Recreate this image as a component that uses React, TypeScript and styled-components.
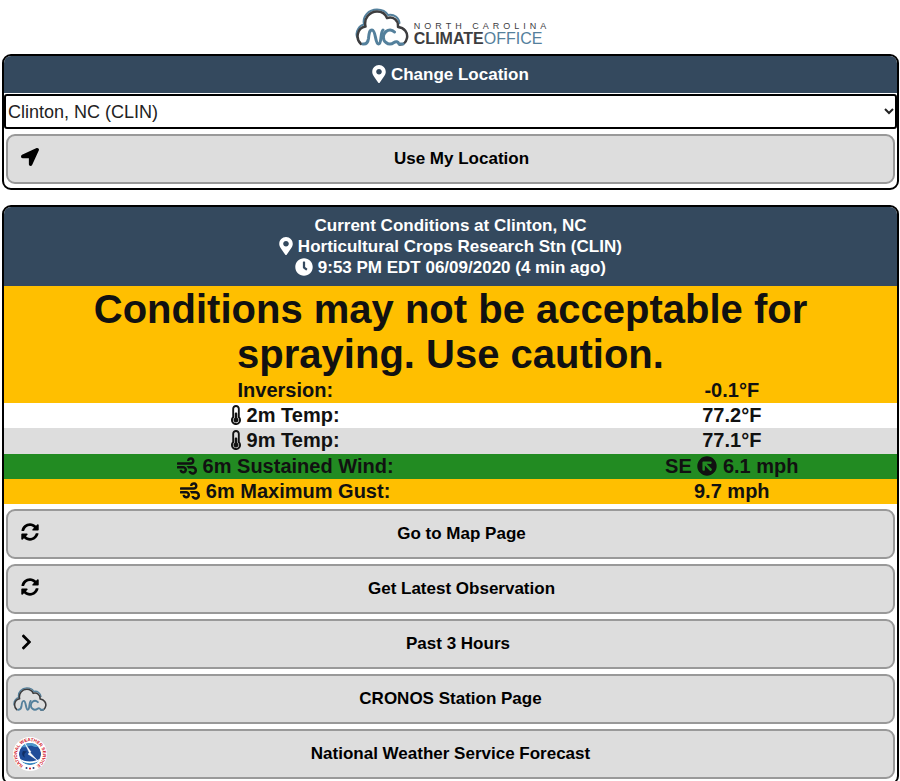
import React from 'react';
import styled, { createGlobalStyle } from 'styled-components';
import {
  FaArrowCircleUp,
  FaChevronRight,
  FaClock,
  FaLocationArrow,
  FaMapMarkerAlt,
  FaSyncAlt,
  FaThermometerHalf,
  FaWind,
} from 'react-icons/fa';

const colors = {
  navy: '#34495e',
  caution: '#ffbf00',
  good: '#228b22',
  gray: '#ddd',
  white: '#fff',
  logoDark: '#3d3d3f',
  logoBlue: '#54809c',
};

const Global = createGlobalStyle`
  *, *::before, *::after { box-sizing: border-box; }
  body {
    margin: 0;
    background: #fff;
    color: #111;
    font-family: "Liberation Sans", Arial, sans-serif;
    font-size: 17px;
  }
`;

const Page = styled.main`
  padding: 8px 1px 8px 2px;
`;

const Brand = styled.header`
  display: flex;
  justify-content: center;
  gap: 5px;
  height: 46px;
`;

const BrandCloud = styled.svg`
  width: 54px;
  height: 38px;
`;

const Wordmark = styled.div`
  padding-top: 14px;
  color: ${colors.logoDark};
`;

const WordmarkTop = styled.div`
  font-size: 9px;
  line-height: 9px;
  letter-spacing: 4px;
  margin-right: -4px;
`;

const WordmarkBottom = styled.div`
  font-size: 16px;
  line-height: 16px;
`;

const WordmarkAccent = styled.span`
  color: ${colors.logoBlue};
`;

const Card = styled.section`
  overflow: hidden;
  margin-bottom: 15px;
  border: 2px solid #000;
  border-radius: 9px;
  background: #fff;
`;

const CardHeader = styled.div`
  padding: 8px;
  background: ${colors.navy};
  color: #fff;
  text-align: center;
  font-weight: bold;
  line-height: 21px;
`;

const HeaderTitle = styled.h2`
  margin: 0;
  font: inherit;
`;

const HeaderLine = styled.div``;

const PinIcon = styled(FaMapMarkerAlt)`
  width: 14px;
  height: 18px;
  vertical-align: -3px;
`;

const ClockIcon = styled(FaClock)`
  width: 18px;
  height: 18px;
  vertical-align: -3px;
`;

const StationSelect = styled.select`
  display: block;
  width: 100%;
  height: 35px;
  margin-top: 1px;
  padding: 0;
  border: 0;
  border-radius: 3px;
  outline: 2px solid #000;
  outline-offset: -2px;
  background: #fff;
  color: #222;
  font: inherit;
  font-size: 18px;
`;

const Actions = styled.div`
  display: flex;
  flex-direction: column;
  gap: 5px;
  padding: 5px 2px 4px;
`;

const ActionButton = styled.button`
  display: flex;
  align-items: center;
  height: 50px;
  padding: 0 13px;
  border: 2px solid #999;
  border-radius: 9px;
  background: ${colors.gray};
  color: #000;
  font: inherit;
  font-weight: bold;
  cursor: pointer;
`;

const ActionLabel = styled.span`
  flex: 1;
`;

const ActionIcon = styled.span<{ $narrow?: boolean }>`
  display: flex;
  padding-bottom: 4px;
  margin-right: 4px;

  svg {
    width: ${(p) => (p.$narrow ? '11px' : '18px')};
    height: 18px;
  }
`;

const ActionLogo = styled.span`
  display: flex;
  flex: 0 0 34px;
  margin: 0 -26px 0 -8px;
`;

const SmallCloud = styled.svg`
  width: 34px;
  height: 24px;
`;

const Seal = styled.svg`
  width: 34px;
  height: 34px;
`;

const SealText = styled.text`
  fill: #d0101e;
  font-size: 9px;
  font-weight: bold;
`;

const Alert = styled.div`
  padding: 1px 0;
  background: ${colors.caution};
  text-align: center;
  font-size: 40px;
  font-weight: bold;
  line-height: 45px;
`;

const Readings = styled.table`
  width: 100%;
  height: 126px;
  border-collapse: collapse;
  table-layout: fixed;
  font-size: 20px;
  line-height: 25px;
  font-weight: bold;
  text-align: center;
`;

const ReadingRow = styled.tr<{ $tone: string }>`
  background: ${(p) => p.$tone};
`;

const Label = styled.th`
  width: 63%;
  padding: 0;
`;

const Value = styled.td`
  padding: 0;
`;

const ThermometerIcon = styled(FaThermometerHalf)`
  width: 10px;
  height: 20px;
  vertical-align: -3px;
`;

const WindIcon = styled(FaWind)`
  width: 20px;
  height: 20px;
  vertical-align: -3px;
`;

const WindDirectionIcon = styled(FaArrowCircleUp)`
  width: 20px;
  height: 20px;
  vertical-align: -3px;
  transform: rotate(-45deg);
`;

const CloudDrawing = () => (
  <g fill="none" strokeLinecap="round" strokeLinejoin="round">
    <path
      d="M2 29C0 23 5 17 9 16.500C7 8 14 1.500 22 1.500C27 1.500 31 3.500 33 7C39 5.500 44 10 44.500 15"
      stroke={colors.logoBlue}
      strokeWidth="2"
    />
    <path
      d="M6 36C0.500 31 1.500 20 10.500 18.500C8.500 10 15 3.500 22 3.500C27 3.500 30.500 6 32 10C38 8 43.500 12 43 19C49.500 19.500 53 25 52 30C51 34.500 48 37 44.500 36.500"
      stroke={colors.logoDark}
      strokeWidth="2.500"
    />
    <path
      d="M8 36C12 36.500 13 34 13.500 30.500C14 25 14.500 22 17 22C21 22 20 36 23.500 36C27 36 25 25 28 22"
      stroke={colors.logoBlue}
      strokeWidth="3"
    />
    <path
      d="M39.500 24C37 21.500 33.500 21.500 31 23.500C27.500 26.500 27.500 32 31 34.500C34 37 37 36 39 34.500C41 33 43 33.500 44 36L48 36"
      stroke={colors.logoBlue}
      strokeWidth="3"
    />
  </g>
);

const WeatherServiceSeal = () => (
  <Seal viewBox="0 0 68 68" aria-hidden="true">
    <defs>
      <path id="seal-ring" d="M22 57.500A26 26 0 1 1 46 57.500" />
      <clipPath id="seal-disc">
        <circle cx="34" cy="34" r="22" />
      </clipPath>
    </defs>
    <circle cx="34" cy="34" r="34" fill="#fff" />
    <SealText textAnchor="middle">
      <textPath href="#seal-ring" startOffset="50%">NATIONAL WEATHER SERVICE</textPath>
    </SealText>
    <g fill="#24427e">
      <circle cx="27" cy="62" r="2" />
      <circle cx="34" cy="63" r="2" fill="#d0101e" />
      <circle cx="41" cy="62" r="2" />
    </g>
    <g clipPath="url(#seal-disc)">
      <circle cx="34" cy="34" r="22" fill="#1f4c99" />
      <path d="M10 12H58V22C50 17 46 23 39 18C32 15 28 23 10 20Z" fill="#4e97cb" />
      <path d="M12 45C21 51 46 51 56 44V58H12Z" fill="#3789c2" />
      <path d="M13 43C24 51 44 51 56 42L54 47C43 54 25 54 14 47Z" fill="#fff" />
      <path d="M24 13L36 30L34 31L48 46L30 34L33 32Z" fill="#fff" stroke="#fff" strokeWidth="1" />
      <path d="M20 28C17 33 18 38 24 41C21 35 23 32 28 29Z" fill="#112e65" />
    </g>
  </Seal>
);

export default function App() {
  return (
    <>
      <Global />
      <Page>
        <Brand>
          <BrandCloud viewBox="0 0 54 38" aria-hidden="true">
            <CloudDrawing />
          </BrandCloud>
          <Wordmark>
            <WordmarkTop>NORTH CAROLINA</WordmarkTop>
            <WordmarkBottom>
              <b>CLIMATE</b>
              <WordmarkAccent>OFFICE</WordmarkAccent>
            </WordmarkBottom>
          </Wordmark>
        </Brand>

        <Card>
          <CardHeader>
            <HeaderTitle>
              <PinIcon /> <label htmlFor="station">Change Location</label>
            </HeaderTitle>
          </CardHeader>
          <StationSelect id="station" defaultValue="CLIN">
            <option value="CLIN">Clinton, NC (CLIN)</option>
          </StationSelect>
          <Actions>
            <ActionButton type="button">
              <ActionIcon><FaLocationArrow /></ActionIcon>
              <ActionLabel>Use My Location</ActionLabel>
            </ActionButton>
          </Actions>
        </Card>

        <Card>
          <CardHeader>
            <HeaderTitle>Current Conditions at Clinton, NC</HeaderTitle>
            <HeaderLine><PinIcon /> Horticultural Crops Research Stn (CLIN)</HeaderLine>
            <HeaderLine><ClockIcon /> 9:53 PM EDT 06/09/2020 (4 min ago)</HeaderLine>
          </CardHeader>
          <Alert role="status">Conditions may not be acceptable for spraying. Use caution.</Alert>
          <Readings>
            <tbody>
              <ReadingRow $tone={colors.caution}>
                <Label scope="row">Inversion:</Label>
                <Value>-0.1°F</Value>
              </ReadingRow>
              <ReadingRow $tone={colors.white}>
                <Label scope="row"><ThermometerIcon /> 2m Temp:</Label>
                <Value>77.2°F</Value>
              </ReadingRow>
              <ReadingRow $tone={colors.gray}>
                <Label scope="row"><ThermometerIcon /> 9m Temp:</Label>
                <Value>77.1°F</Value>
              </ReadingRow>
              <ReadingRow $tone={colors.good}>
                <Label scope="row"><WindIcon /> 6m Sustained Wind:</Label>
                <Value>SE <WindDirectionIcon /> 6.1 mph</Value>
              </ReadingRow>
              <ReadingRow $tone={colors.caution}>
                <Label scope="row"><WindIcon /> 6m Maximum Gust:</Label>
                <Value>9.7 mph</Value>
              </ReadingRow>
            </tbody>
          </Readings>
          <Actions>
            <ActionButton type="button">
              <ActionIcon><FaSyncAlt /></ActionIcon>
              <ActionLabel>Go to Map Page</ActionLabel>
            </ActionButton>
            <ActionButton type="button">
              <ActionIcon><FaSyncAlt /></ActionIcon>
              <ActionLabel>Get Latest Observation</ActionLabel>
            </ActionButton>
            <ActionButton type="button">
              <ActionIcon $narrow><FaChevronRight /></ActionIcon>
              <ActionLabel>Past 3 Hours</ActionLabel>
            </ActionButton>
            <ActionButton type="button">
              <ActionLogo>
                <SmallCloud viewBox="0 0 54 38" aria-hidden="true">
                  <CloudDrawing />
                </SmallCloud>
              </ActionLogo>
              <ActionLabel>CRONOS Station Page</ActionLabel>
            </ActionButton>
            <ActionButton type="button">
              <ActionLogo>
                <WeatherServiceSeal />
              </ActionLogo>
              <ActionLabel>National Weather Service Forecast</ActionLabel>
            </ActionButton>
          </Actions>
        </Card>
      </Page>
    </>
  );
}
